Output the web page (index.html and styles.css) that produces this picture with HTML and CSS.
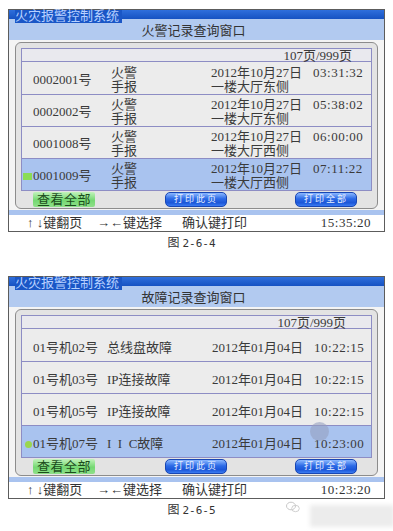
FILE: index.html
```html
<!DOCTYPE html>
<html lang="zh-CN">
<head>
    <meta charset="UTF-8">
    <meta name="viewport" content="width=device-width, initial-scale=1.0">
    <title>火灾报警控制系统</title>
    <link rel="stylesheet" href="styles.css">
</head>
<body>
    <div class="page">
        <!-- 图 2-6-4 火警记录 -->
        <div class="figure">
            <div class="screen">
                <div class="sysbar"><span class="sysname">火灾报警控制系统</span></div>
                <div class="wintitle">火警记录查询窗口</div>
                <div class="body">
                    <div class="panel">
                        <div class="table">
                            <div class="pager">107页/999页</div>
                            <div class="row">
                                <div>0002001号</div>
                                <div class="two">火警<br>手报</div>
                                <div class="two">2012年10月27日<span class="clock">03:31:32</span><br>一楼大厅东侧</div>
                            </div>
                            <div class="row">
                                <div>0002002号</div>
                                <div class="two">火警<br>手报</div>
                                <div class="two">2012年10月27日<span class="clock">05:38:02</span><br>一楼大厅东侧</div>
                            </div>
                            <div class="row">
                                <div>0001008号</div>
                                <div class="two">火警<br>手报</div>
                                <div class="two">2012年10月27日<span class="clock">06:00:00</span><br>一楼大厅西侧</div>
                            </div>
                            <div class="row sel">
                                <div><span class="mark"></span>0001009号</div>
                                <div class="two">火警<br>手报</div>
                                <div class="two">2012年10月27日<span class="clock">07:11:22</span><br>一楼大厅西侧</div>
                            </div>
                        </div>
                        <div class="btns">
                            <div class="btn-green">查看全部</div>
                            <div class="btn-blue first">打印此页</div>
                            <div class="btn-blue">打印全部</div>
                        </div>
                    </div>
                </div>
                <div class="strip"></div>
                <div class="status">
                    <span>↑ ↓键翻页</span>
                    <span>→←键选择</span>
                    <span>确认键打印</span>
                    <span class="clock-s">15:35:20</span>
                </div>
            </div>
            <div class="caption">图 <span class="fig-no">2-6-4</span></div>
        </div>

        <!-- 图 2-6-5 故障记录 -->
        <div class="figure">
            <div class="screen">
                <div class="sysbar"><span class="sysname">火灾报警控制系统</span></div>
                <div class="wintitle">故障记录查询窗口</div>
                <div class="body">
                    <div class="panel">
                        <div class="table">
                            <div class="pager pager-2">107页/999页</div>
                            <div class="row fault">
                                <div>01号机02号</div>
                                <div>总线盘故障</div>
                                <div>2012年01月04日<span class="clock">10:22:15</span></div>
                            </div>
                            <div class="row fault">
                                <div>01号机03号</div>
                                <div>IP连接故障</div>
                                <div>2012年01月04日<span class="clock">10:22:15</span></div>
                            </div>
                            <div class="row fault">
                                <div>01号机05号</div>
                                <div>IP连接故障</div>
                                <div>2012年01月04日<span class="clock">10:22:15</span></div>
                            </div>
                            <div class="row fault sel">
                                <div><span class="mark dot"></span>01号机07号</div>
                                <div>I&nbsp; I&nbsp; C故障</div>
                                <div>2012年01月04日<span class="clock">10:23:00</span></div>
                                <span class="blob"></span>
                            </div>
                        </div>
                        <div class="btns">
                            <div class="btn-green">查看全部</div>
                            <div class="btn-blue first">打印此页</div>
                            <div class="btn-blue">打印全部</div>
                        </div>
                    </div>
                </div>
                <div class="strip"></div>
                <div class="status">
                    <span>↑ ↓键翻页</span>
                    <span>→←键选择</span>
                    <span>确认键打印</span>
                    <span class="clock-s">10:23:20</span>
                </div>
            </div>
            <div class="caption">图 <span class="fig-no">2-6-5</span></div>
        </div>

        <!-- watermark smudge, bottom right -->
        <div class="wm">
            <svg width="14" height="12" viewBox="0 0 14 12">
                <ellipse cx="5" cy="5" rx="4.5" ry="3.8" fill="none" stroke="#c8c8c8" stroke-width="1"/>
                <ellipse cx="9.5" cy="7.5" rx="3.8" ry="3.2" fill="none" stroke="#d0d0d0" stroke-width="1"/>
            </svg>
            <div class="wm-bar"></div>
        </div>
    </div>
</body>
</html>
```

FILE: styles.css
```css
* {
    box-sizing: border-box;
}
body {
    margin: 0;
    font-family: "Liberation Serif", "Noto Sans CJK SC", serif;
    font-size: 13px;
    color: #3a3a3a;
    background: #fff;
}
.page {
    position: relative;
    padding-top: 9px;
    height: 531px;
    overflow: hidden;
}
.figure {
    width: 377px;
    margin-left: 8px;
}
.figure + .figure {
    margin-top: 24px;
}
.screen {
    border: 1px solid #5c5c5c;
    background: #f3f3f3;
}

/* title bars */
.sysbar {
    height: 9px;
    padding-left: 6px;
    background: linear-gradient(#2f6fdc, #1652c2);
    line-height: 13px;
}
.sysname {
    display: inline-block;
    height: 13px;
    padding-right: 3px;
    vertical-align: top;
    background: #1a56c6;
    color: #b7d0ff;
    font-size: 13px;
    line-height: 12px;
}
.wintitle {
    height: 21px;
    line-height: 24px;
    text-align: center;
    padding-right: 6px;
    background: #b2caf0;
    color: #333;
}

/* main area */
.body {
    padding: 2px 6px 1px;
    background: #f4f4f4;
}
.panel {
    border: 1px solid #8c8c8c;
    border-radius: 6px;
    background: #e3e3e3;
    padding: 5px 5px 0;
}
.table {
    border: 1px solid #8d8dc4;
    background: #ececec;
}
.pager {
    height: 13px;
    line-height: 14px;
    text-align: right;
    padding-right: 19px;
    border-bottom: 1px solid #8d8dc4;
    background: #e9e9ee;
}
.pager-2 {
    padding-right: 25px;
}
.row {
    position: relative;
    height: 32px;
    display: grid;
    grid-template-columns: 78px 100px 1fr;
    align-items: center;
    padding-left: 11px;
}
.row + .row {
    border-top: 1px solid #8d8dc4;
}
.row.fault {
    grid-template-columns: 74px 105px 1fr;
    padding-top: 2px;
}
.row.sel {
    background: #a9c3ef;
}
.two {
    line-height: 14px;
    padding-top: 3px;
}
.clock {
    margin-left: 11px;
    letter-spacing: 0.5px;
}
.mark {
    display: inline-block;
    width: 9px;
    height: 7px;
    margin-left: -10px;
    margin-right: 1px;
    background: #8bdc55;
}
.mark.dot {
    width: 7px;
    height: 7px;
    margin-left: -8px;
    border-radius: 50%;
    background: #9ad64e;
}
.blob {
    position: absolute;
    left: 288px;
    top: -4px;
    width: 19px;
    height: 19px;
    border-radius: 50%;
    background: rgba(150, 160, 192, 0.6);
}

/* buttons */
.btns {
    height: 17px;
    display: flex;
    align-items: center;
    padding-left: 12px;
}
.btn-green {
    width: 62px;
    height: 15px;
    line-height: 15px;
    text-align: center;
    border-radius: 2px;
    background: linear-gradient(#c2f3bb, #74d872 55%, #8fe08a);
    color: #1c4d1c;
    letter-spacing: 0.5px;
}
.btn-blue {
    width: 62px;
    height: 15px;
    margin-left: 68px;
    line-height: 13px;
    text-align: center;
    border: 1px solid #1846b4;
    border-radius: 5px;
    background: linear-gradient(#8cb8ff, #2c6ae6 45%, #1b56d8 75%, #3b7cf2);
    color: #eaf1ff;
    font-size: 9px;
    letter-spacing: 2px;
}
.btn-blue.first {
    margin-left: 70px;
}

/* status line */
.strip {
    height: 5px;
    background: #a9c3ef;
}
.status {
    height: 16px;
    display: grid;
    grid-template-columns: 70px 85px 1fr auto;
    padding: 0 13px 0 18px;
    line-height: 16px;
    background: #fff;
    color: #333;
}
.clock-s {
    letter-spacing: 0.5px;
}

.caption {
    margin-top: 3px;
    padding-right: 10px;
    line-height: 16px;
    text-align: center;
    font-size: 12px;
    color: #333;
}
.fig-no {
    font-family: "DejaVu Sans Mono", monospace;
    font-size: 11px;
}

/* watermark smudge */
.wm {
    position: absolute;
    left: 286px;
    top: 501px;
    display: flex;
    align-items: flex-start;
    gap: 10px;
}
.wm-bar {
    width: 84px;
    height: 22px;
    margin-top: 4px;
    background: #ececec;
    filter: blur(2px);
}
```
